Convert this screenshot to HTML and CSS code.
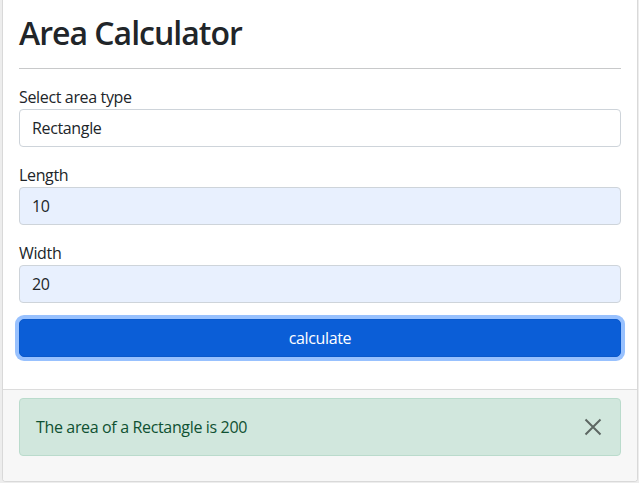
FILE: index.html
```html
<!DOCTYPE html>
<html lang="en">
<head>
<meta charset="utf-8">
<title>Area Calculator</title>
<link rel="stylesheet" href="styles.css">
</head>
<body>
<div class="card">
  <div class="card-body">
    <h1 class="title">Area Calculator</h1>
    <hr class="divider">
    <form class="calc-form">
      <div class="field">
        <label class="field-label" for="type">Select area type</label>
        <div class="control select-control" id="type">Rectangle</div>
      </div>
      <div class="field">
        <label class="field-label" for="length">Length</label>
        <input class="control filled" id="length" type="text" value="10">
      </div>
      <div class="field">
        <label class="field-label" for="width">Width</label>
        <input class="control filled" id="width" type="text" value="20">
      </div>
      <button type="button" class="btn-calc">calculate</button>
    </form>
  </div>
  <div class="card-footer">
    <div class="alert">
      <span class="alert-text">The area of a Rectangle is 200</span>
      <span class="btn-close" aria-label="Close">
        <svg width="18" height="18" viewBox="0 0 18 18"><path d="M1.5 1.5 L16.5 16.5 M16.5 1.5 L1.5 16.5" stroke="#000" stroke-width="2" fill="none"/></svg>
      </span>
    </div>
  </div>
</div>
</body>
</html>
```

FILE: styles.css
```css
* { box-sizing: border-box; }
html, body { margin: 0; padding: 0; }
body {
  background: #ededed;
  font-family: "Open Sans", "Noto Sans", sans-serif;
  font-size: 16px;
  line-height: 1.5;
  letter-spacing: -0.35px;
  color: #212529;
  height: 483px;
  overflow: hidden;
}
.card {
  margin: 0 1px 0 2px;
  background: #fff;
  border: 1px solid #d9d9d9;
  border-top: 0;
  border-radius: 0 0 4px 4px;
  overflow: hidden;
}
.card-body {
  padding: 14px 16px 16px;
}
.title {
  margin: 0;
  font-size: 32px;
  font-weight: 600;
  line-height: 1.2;
  letter-spacing: -1px;
}
.divider {
  margin: 16px 0;
  border: 0;
  border-top: 1px solid #c8c9ca;
}
.calc-form { display: flex; flex-direction: column; }
.field { display: flex; flex-direction: column; margin-bottom: 16px; }
.field-label { display: block; margin-bottom: 0; }
.control {
  display: block;
  width: 100%;
  height: 38px;
  padding: 6px 12px;
  font: inherit;
  letter-spacing: inherit;
  color: #212529;
  background: #fff;
  border: 1px solid #ced4da;
  border-radius: 4px;
  outline: none;
}
.filled { background: #e8f0fe; }
.btn-calc {
  height: 38px;
  width: 100%;
  font: inherit;
  letter-spacing: inherit;
  color: #fff;
  background: #0b5ed7;
  border: 1px solid #0a58ca;
  border-radius: 5px;
  box-shadow: 0 0 0 4px #98c1fe;
  margin-bottom: 16px;
}
.card-footer {
  background: #f7f7f7;
  border-top: 1px solid #dcdcdc;
  padding: 8px 16px 9px;
}
.alert {
  display: flex;
  align-items: center;
  justify-content: space-between;
  padding: 16px 18px 16px 16px;
  margin-bottom: 16px;
  background: #d1e7dd;
  border: 1px solid #badbcc;
  border-radius: 4px;
  color: #0f5132;
}
.btn-close { display: flex; opacity: .55; }
```
